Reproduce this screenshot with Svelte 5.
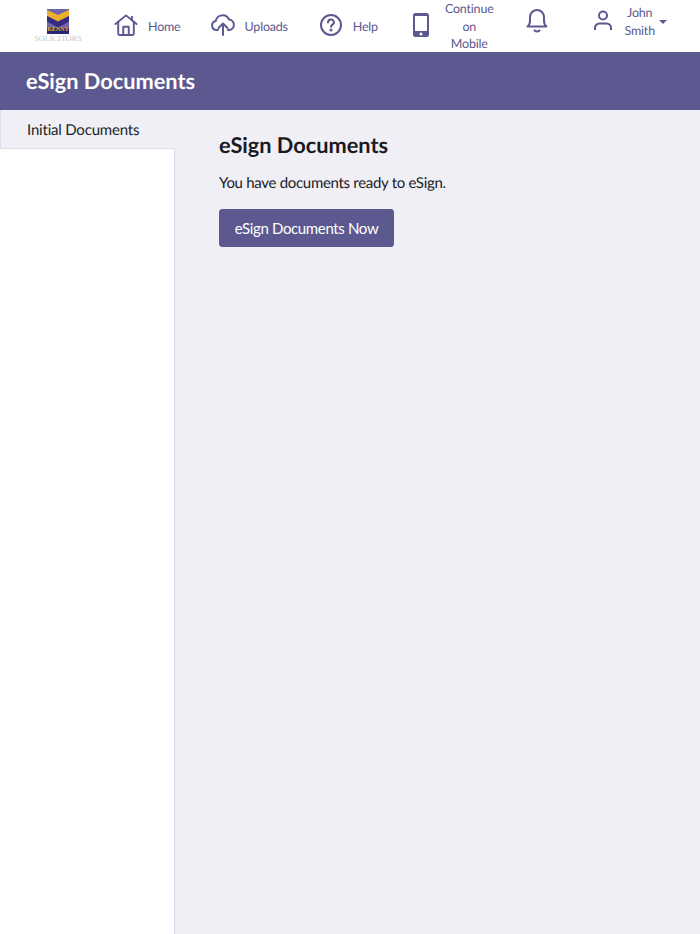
<script>
  const items = [
    { id: 'home', label: ['Home'] },
    { id: 'uploads', label: ['Uploads'] },
    { id: 'help', label: ['Help'] },
    { id: 'mobile', label: ['Continue', 'on', 'Mobile'] }
  ];
</script>

<div class="page">
  <header class="nav">
    <div class="logo">
      <div class="mark">
        <svg viewBox="0 0 22 25" width="22" height="25">
          <rect width="22" height="25" fill="#6f66a8" />
          <path d="M0 1 11 6 22 1v6L11 12.500 0 7z" fill="#eeb02c" />
          <path d="M0 7 11 12.500 22 7v5.500L11 18.500 0 12.500z" fill="#342c80" />
          <rect y="18.500" width="22" height="6.500" fill="#2b2470" />
        </svg>
        <span class="kenny">KENNY</span>
      </div>
      <span class="sol">SOLICITORS</span>
    </div>

    {#each items as item}
      <div class="item {item.id}">
        {#if item.id === 'home'}
          <svg class="ic" width="24" height="22" viewBox="0 0 26 24" fill="none" stroke="#5c5890" stroke-width="2.100" stroke-linecap="round" stroke-linejoin="round">
            <path d="M1.500 11 13 1.500 24.500 11" />
            <path d="M4.500 9v12a2 2 0 0 0 2 2h13a2 2 0 0 0 2-2V9" />
            <path d="M10 23v-9h6v9" />
            <path d="M19.500 3v3.500" />
          </svg>
        {:else if item.id === 'uploads'}
          <svg class="ic" width="24" height="22" viewBox="0 0 24 22" fill="none" stroke="#5c5890" stroke-width="2" stroke-linecap="round" stroke-linejoin="round">
            <path d="M7 16H5.500A4.500 4.500 0 0 1 4.700 7.100 7 7 0 0 1 18 5.500 5.300 5.300 0 0 1 18.500 16H17" />
            <path d="M12 21V10" />
            <path d="m7.500 14 4.500-4.500 4.500 4.500" />
          </svg>
        {:else if item.id === 'help'}
          <svg class="ic" width="22" height="22" viewBox="0 0 22 22" fill="none" stroke="#5c5890" stroke-width="2" stroke-linecap="round">
            <circle cx="11" cy="11" r="10" />
            <path d="M8 8.500a3 3 0 0 1 6 0c0 2-3 2.300-3 4.300" />
            <circle cx="11" cy="16" r=".6" fill="#5c5890" />
          </svg>
        {:else}
          <svg class="ic" width="16" height="24" viewBox="0 0 16 24">
            <rect width="16" height="24" rx="2.500" fill="#5c5890" />
            <rect x="2" y="3" width="12" height="15" fill="#fff" />
            <circle cx="8" cy="21" r="1.500" fill="#fff" />
          </svg>
        {/if}
        <span class="label">
          {#each item.label as line}<span class="line">{line}</span>{/each}
        </span>
      </div>
    {/each}

    <svg class="bell" width="22" height="24" viewBox="0 0 22 24" fill="none" stroke="#5c5890" stroke-width="2" stroke-linecap="round" stroke-linejoin="round">
      <path d="M1.500 17.500c2-1.500 2.500-3 2.500-6V8a7 7 0 0 1 14 0v3.500c0 3 .5 4.500 2.500 6z" />
      <path d="M8.500 21.500c1.500 1.300 3.500 1.300 5 0" />
    </svg>

    <div class="user">
      <svg class="avatar" width="20" height="20" viewBox="0 0 20 20" fill="none" stroke="#5c5890" stroke-width="2" stroke-linecap="round">
        <circle cx="10" cy="5.500" r="4" />
        <path d="M2 19.500V18a4.500 4.500 0 0 1 4.500-4.500h7A4.500 4.500 0 0 1 18 18v1.500" />
      </svg>
      <span class="label name"><span class="line">John</span><span class="line">Smith</span></span>
      <span class="caret"></span>
    </div>
  </header>

  <div class="banner">eSign Documents</div>

  <div class="body">
    <aside class="side">
      <div class="tab">Initial Documents</div>
    </aside>
    <main class="main">
      <h2>eSign Documents</h2>
      <p>You have documents ready to eSign.</p>
      <button type="button">eSign Documents Now</button>
    </main>
  </div>
</div>

<style>
  :global(body) {
    margin: 0;
    background: #f0eff5;
  }
  .page {
    width: 700px;
    height: 934px;
    display: flex;
    flex-direction: column;
    font-family: Lato, "Liberation Sans", sans-serif;
    text-rendering: geometricPrecision;
    overflow: hidden;
  }
  .nav {
    height: 52px;
    flex: none;
    background: #fff;
    display: flex;
    align-items: center;
    color: #5c5890;
    font-size: 12.500px;
    letter-spacing: -0.200px;
    line-height: 17.500px;
  }
  .nav > * {
    flex: none;
  }
  .logo {
    width: 50px;
    margin-left: 33px;
    margin-top: -1px;
    display: flex;
    flex-direction: column;
    align-items: center;
    letter-spacing: 0;
  }
  .mark {
    position: relative;
    width: 22px;
    height: 25px;
  }
  .mark svg {
    display: block;
  }
  .kenny {
    position: absolute;
    left: 0;
    right: 0;
    bottom: 0;
    text-align: center;
    font: bold 6px/7px "Liberation Serif", serif;
    color: #eeb02c;
  }
  .sol {
    font: 8px/9px "Liberation Serif", serif;
    color: #c4c4c8;
    letter-spacing: 0.150px;
    white-space: nowrap;
  }
  .item,
  .user {
    display: flex;
    align-items: center;
  }
  .ic {
    flex: none;
    margin-top: -2px;
  }
  .avatar {
    flex: none;
    margin-top: -3px;
  }
  .label {
    display: flex;
    flex-direction: column;
    align-items: center;
  }
  .item .label {
    padding-top: 1px;
  }
  .line {
    display: block;
  }
  .home { margin-left: 31px; gap: 10px; }
  .uploads { margin-left: 30px; gap: 10px; }
  .help { margin-left: 32px; gap: 11px; }
  .mobile { margin-left: 35px; gap: 16px; }
  .bell { margin-left: 32px; margin-top: -11px; }
  .user { margin-left: 45px; margin-top: -9px; }
  .name { margin-left: 12px; }
  .caret {
    width: 0;
    height: 0;
    margin-left: 4px;
    margin-top: 1px;
    border-left: 4px solid transparent;
    border-right: 4px solid transparent;
    border-top: 4.500px solid #5c5890;
  }
  .banner {
    height: 58px;
    flex: none;
    background: #5c5890;
    color: #fff;
    font-size: 21.750px;
    font-weight: 700;
    line-height: 58px;
    padding-left: 26px;
  }
  .body {
    flex: 1;
    display: flex;
    min-height: 0;
  }
  .side {
    width: 174px;
    flex: none;
    background: #fff;
    border-right: 1px solid #dcdaec;
  }
  .tab {
    height: 38px;
    margin-right: -1px;
    background: #f0eff5;
    border-left: 1px solid #dcdaec;
    border-bottom: 1px solid #dcdaec;
    padding-left: 26px;
    line-height: 40px;
    font-size: 15px;
    letter-spacing: -0.200px;
    color: #212529;
  }
  .main {
    flex: 1;
    padding: 22px 0 0 44px;
    color: #1a1a1f;
  }
  h2 {
    margin: 0;
    font-size: 21.750px;
    line-height: 26px;
    font-weight: 700;
  }
  p {
    margin: 14px 0 0;
    font-size: 15px;
    letter-spacing: -0.300px;
    line-height: 22px;
  }
  button {
    display: block;
    margin-top: 15px;
    width: 175px;
    height: 38px;
    padding: 0;
    border: 1px solid #5c5890;
    border-radius: 3px;
    background: #5c5890;
    color: #fff;
    font: 15px Lato, sans-serif;
    letter-spacing: -0.350px;
  }
</style>
